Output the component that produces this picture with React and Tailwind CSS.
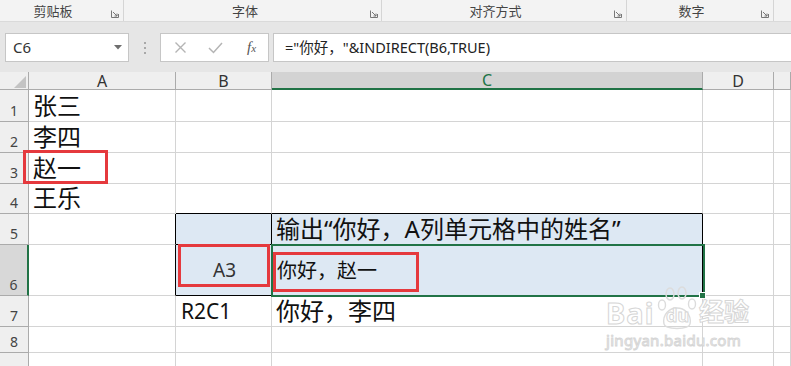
import React from "react";

const FONT = "font-['Noto_Sans','Noto_Sans_CJK_SC',sans-serif]";

function Launcher() {
  return (
    <svg width="8" height="8" viewBox="0 0 8 8" className="block">
      <path d="M0.5 0.5 V7.5 H7.5 V4" fill="none" stroke="#777" strokeWidth="1" />
      <path d="M2 2 L6 6 M6 3.5 V6 H3.5" fill="none" stroke="#777" strokeWidth="1" />
    </svg>
  );
}

function Group({ label, width, labelWidth }) {
  return (
    <div className="flex h-full items-center border-r border-[#d5d5d5]" style={{ width }}>
      <div className="flex justify-center text-[13px] text-[#444] pt-[2px]" style={{ width: labelWidth }}>
        {label}
      </div>
      <div className="flex flex-1 justify-center pt-[6px]">
        <Launcher />
      </div>
    </div>
  );
}

const rowHeights = [32, 31, 31, 30, 31, 51, 31, 26, 31];
const colWidths = [147, 96, 431, 71, 17];
const colLetters = ["A", "B", "C", "D", ""];

export default function App() {
  const cells = {
    "0-0": { text: "张三" },
    "1-0": { text: "李四" },
    "2-0": { text: "赵一" },
    "3-0": { text: "王乐" },
    "4-1": { blue: true },
    "4-2": { blue: true, text: "输出“你好，A列单元格中的姓名”" },
    "5-1": { blue: true, text: "A3", small: true, center: true },
    "5-2": { blue: true, text: "你好，赵一", small: true },
    "6-1": { text: "R2C1", latin: true },
    "6-2": { text: "你好，李四" },
  };

  const borderClass = (r, c) => {
    let right = "border-r-[#d4d4d4]";
    let bottom = "border-b-[#d4d4d4]";
    if (c === 0 && (r === 4 || r === 5)) right = "border-r-black";
    if ((c === 1 || c === 2) && (r === 4 || r === 5)) right = "border-r-black";
    if ((c === 1 || c === 2) && (r === 3 || r === 4 || r === 5)) bottom = "border-b-black";
    return `${right} ${bottom}`;
  };

  return (
    <div className={`relative w-[791px] h-[366px] overflow-hidden bg-white ${FONT}`}>
      {/* Ribbon group labels */}
      <div className="flex h-[22px] bg-[#f3f3f3] border-b border-[#dadada]">
        <Group label="剪贴板" width={124} labelWidth={106} />
        <Group label="字体" width={258} labelWidth={242} />
        <Group label="对齐方式" width={245} labelWidth={227} />
        <Group label="数字" width={147} labelWidth={129} />
        <div className="flex-1" />
      </div>

      {/* Formula bar band */}
      <div className="flex items-center h-[50px] bg-[#e6e6e6] pt-[1px]">
        <div className="ml-[5px] flex items-center w-[124px] h-[29px] bg-white border border-[#c6c6c6]">
          <span className="ml-[7px] text-[15px] text-[#333] flex-1">C6</span>
          <svg width="8" height="5" viewBox="0 0 8 5" className="mr-[6px]">
            <path d="M0 0 H8 L4 4.5 Z" fill="#6e6e6e" />
          </svg>
        </div>
        <div className="w-[31px] flex flex-col items-center gap-[3px]">
          <div className="w-[2px] h-[2px] bg-[#a8a8a8]" />
          <div className="w-[2px] h-[2px] bg-[#a8a8a8]" />
          <div className="w-[2px] h-[2px] bg-[#a8a8a8]" />
        </div>
        <div className="flex items-center w-[109px] h-[29px] bg-white border border-[#c6c6c6]">
          <svg width="13" height="13" viewBox="0 0 13 13" className="ml-[13px]">
            <path d="M1.5 1.5 L11.5 11.5 M11.5 1.5 L1.5 11.5" stroke="#b4b4b4" strokeWidth="1.4" />
          </svg>
          <svg width="15" height="13" viewBox="0 0 15 13" className="ml-[21px]">
            <path d="M1 7 L5.5 11.5 L14 2" fill="none" stroke="#b4b4b4" strokeWidth="1.5" />
          </svg>
          <span className="ml-[24px] text-[15px] italic text-[#555] font-['Liberation_Serif',serif] leading-none">
            f<span className="text-[11px]">x</span>
          </span>
        </div>
        <div className="ml-[4px] flex items-center flex-1 h-[29px] bg-white border border-r-0 border-[#c6c6c6]">
          <span className="ml-[11px] text-[14.5px] text-[#222]">="你好，"&amp;INDIRECT(B6,TRUE)</span>
        </div>
      </div>

      {/* Sheet grid */}
      <div
        className="grid"
        style={{
          gridTemplateColumns: `29px ${colWidths.map((w) => w + "px").join(" ")}`,
          gridTemplateRows: `18px ${rowHeights.map((h) => h + "px").join(" ")}`,
        }}
      >
        <div className="relative bg-[#efefef] border-r border-b border-[#ababab]">
          <svg width="29" height="18" viewBox="0 0 29 18" className="absolute inset-0">
            <path d="M14 16 H26 V4 Z" fill="#c3c3c3" />
          </svg>
        </div>
        {colLetters.map((l, i) => (
          <div
            key={l + i}
            className={
              i === 2
                ? "flex items-center justify-center bg-[#d3d3d3] border-r border-r-[#ababab] border-b-2 border-b-[#217346] text-[16px] text-[#217346] leading-none"
                : "flex items-center justify-center bg-[#efefef] border-r border-r-[#ababab] border-b border-b-[#ababab] text-[16px] text-[#333] leading-none"
            }
          >
            {l}
          </div>
        ))}

        {rowHeights.map((h, r) => (
          <React.Fragment key={r}>
            <div
              className={
                r === 5
                  ? "flex items-end justify-center pb-[2px] bg-[#d8d8d8] border-r-2 border-r-[#217346] border-b border-b-[#ababab] text-[14px] text-[#444] leading-[16px]"
                  : "flex items-end justify-center pb-[2px] bg-[#efefef] border-r border-r-[#ababab] border-b border-b-[#ababab] text-[14px] text-[#444] leading-[16px]"
              }
            >
              {r < 8 ? r + 1 : ""}
            </div>
            {colWidths.map((w, c) => {
              const cell = cells[`${r}-${c}`] || {};
              const bg = cell.blue ? "bg-[#dde8f3]" : "bg-white";
              let content = null;
              if (cell.text) {
                if (cell.small) {
                  content = (
                    <div
                      className={`flex h-full items-center ${cell.center ? "justify-center pl-[2px] text-[19px] text-[#333]" : "pl-[5px] pt-[2px] text-[20px] text-[#111]"} leading-none`}
                    >
                      {cell.text}
                    </div>
                  );
                } else if (cell.latin) {
                  content = (
                    <div className="flex h-full items-end pl-[5px] pb-[4px] text-[21px] text-[#111] leading-none">
                      {cell.text}
                    </div>
                  );
                } else {
                  content = (
                    <div className="flex h-full items-end pl-[4px] pb-[3px] text-[24px] text-[#111] leading-none whitespace-nowrap">
                      {cell.text}
                    </div>
                  );
                }
              }
              return (
                <div key={c} className={`border-r border-b ${bg} ${borderClass(r, c)}`}>
                  {content}
                </div>
              );
            })}
          </React.Fragment>
        ))}
      </div>

      {/* Selection outline C6 */}
      <div className="absolute left-[271px] top-[244px] w-[434px] h-[53px] border-2 border-[#217346]" />
      <div className="absolute left-[699px] top-[292px] w-[7px] h-[7px] bg-[#217346] border border-white" />

      {/* Red annotation boxes */}
      <div className="absolute left-[23px] top-[150px] w-[85px] h-[34px] border-[3px] border-[#e5393d]" />
      <div className="absolute left-[178px] top-[244px] w-[92px] h-[43px] border-[3px] border-[#e5393d]" />
      <div className="absolute left-[273px] top-[252px] w-[146px] h-[40px] border-[3px] border-[#e5393d]" />

      {/* Watermark */}
      <div className="absolute left-[604px] top-[284px] w-[150px] h-[70px] pointer-events-none">
        <svg width="150" height="70" viewBox="0 0 150 70" className="absolute inset-0">
          <g fill="none" stroke="#dcdcdc" strokeWidth="1.4">
            <ellipse cx="66" cy="10" rx="4" ry="6" />
            <ellipse cx="78" cy="9" rx="4" ry="6" />
            <ellipse cx="58" cy="21" rx="3.5" ry="5" />
            <ellipse cx="88" cy="20" rx="3.5" ry="5" />
            <path d="M60 40 C58 30 66 24 73 24 C80 24 88 30 86 40 C85 46 61 46 60 40 Z" />
          </g>
        </svg>
        <div className="absolute left-[2px] top-[14px] text-[29px] font-bold leading-none text-white [-webkit-text-stroke:1px_#d6d6d6] tracking-[1px]">
          Bai
        </div>
        <div className="absolute left-[62px] top-[22px] text-[18px] font-bold leading-none text-white [-webkit-text-stroke:1px_#d6d6d6]">
          du
        </div>
        <div className="absolute left-[95px] top-[15px] text-[25px] font-bold leading-none text-white [-webkit-text-stroke:1px_#d6d6d6]">
          经验
        </div>
        <div className="absolute left-[2px] top-[49px] text-[15px] leading-none text-white [-webkit-text-stroke:1px_#d6d6d6] tracking-[0.3px]">
          jingyan.baidu.com
        </div>
      </div>
    </div>
  );
}
